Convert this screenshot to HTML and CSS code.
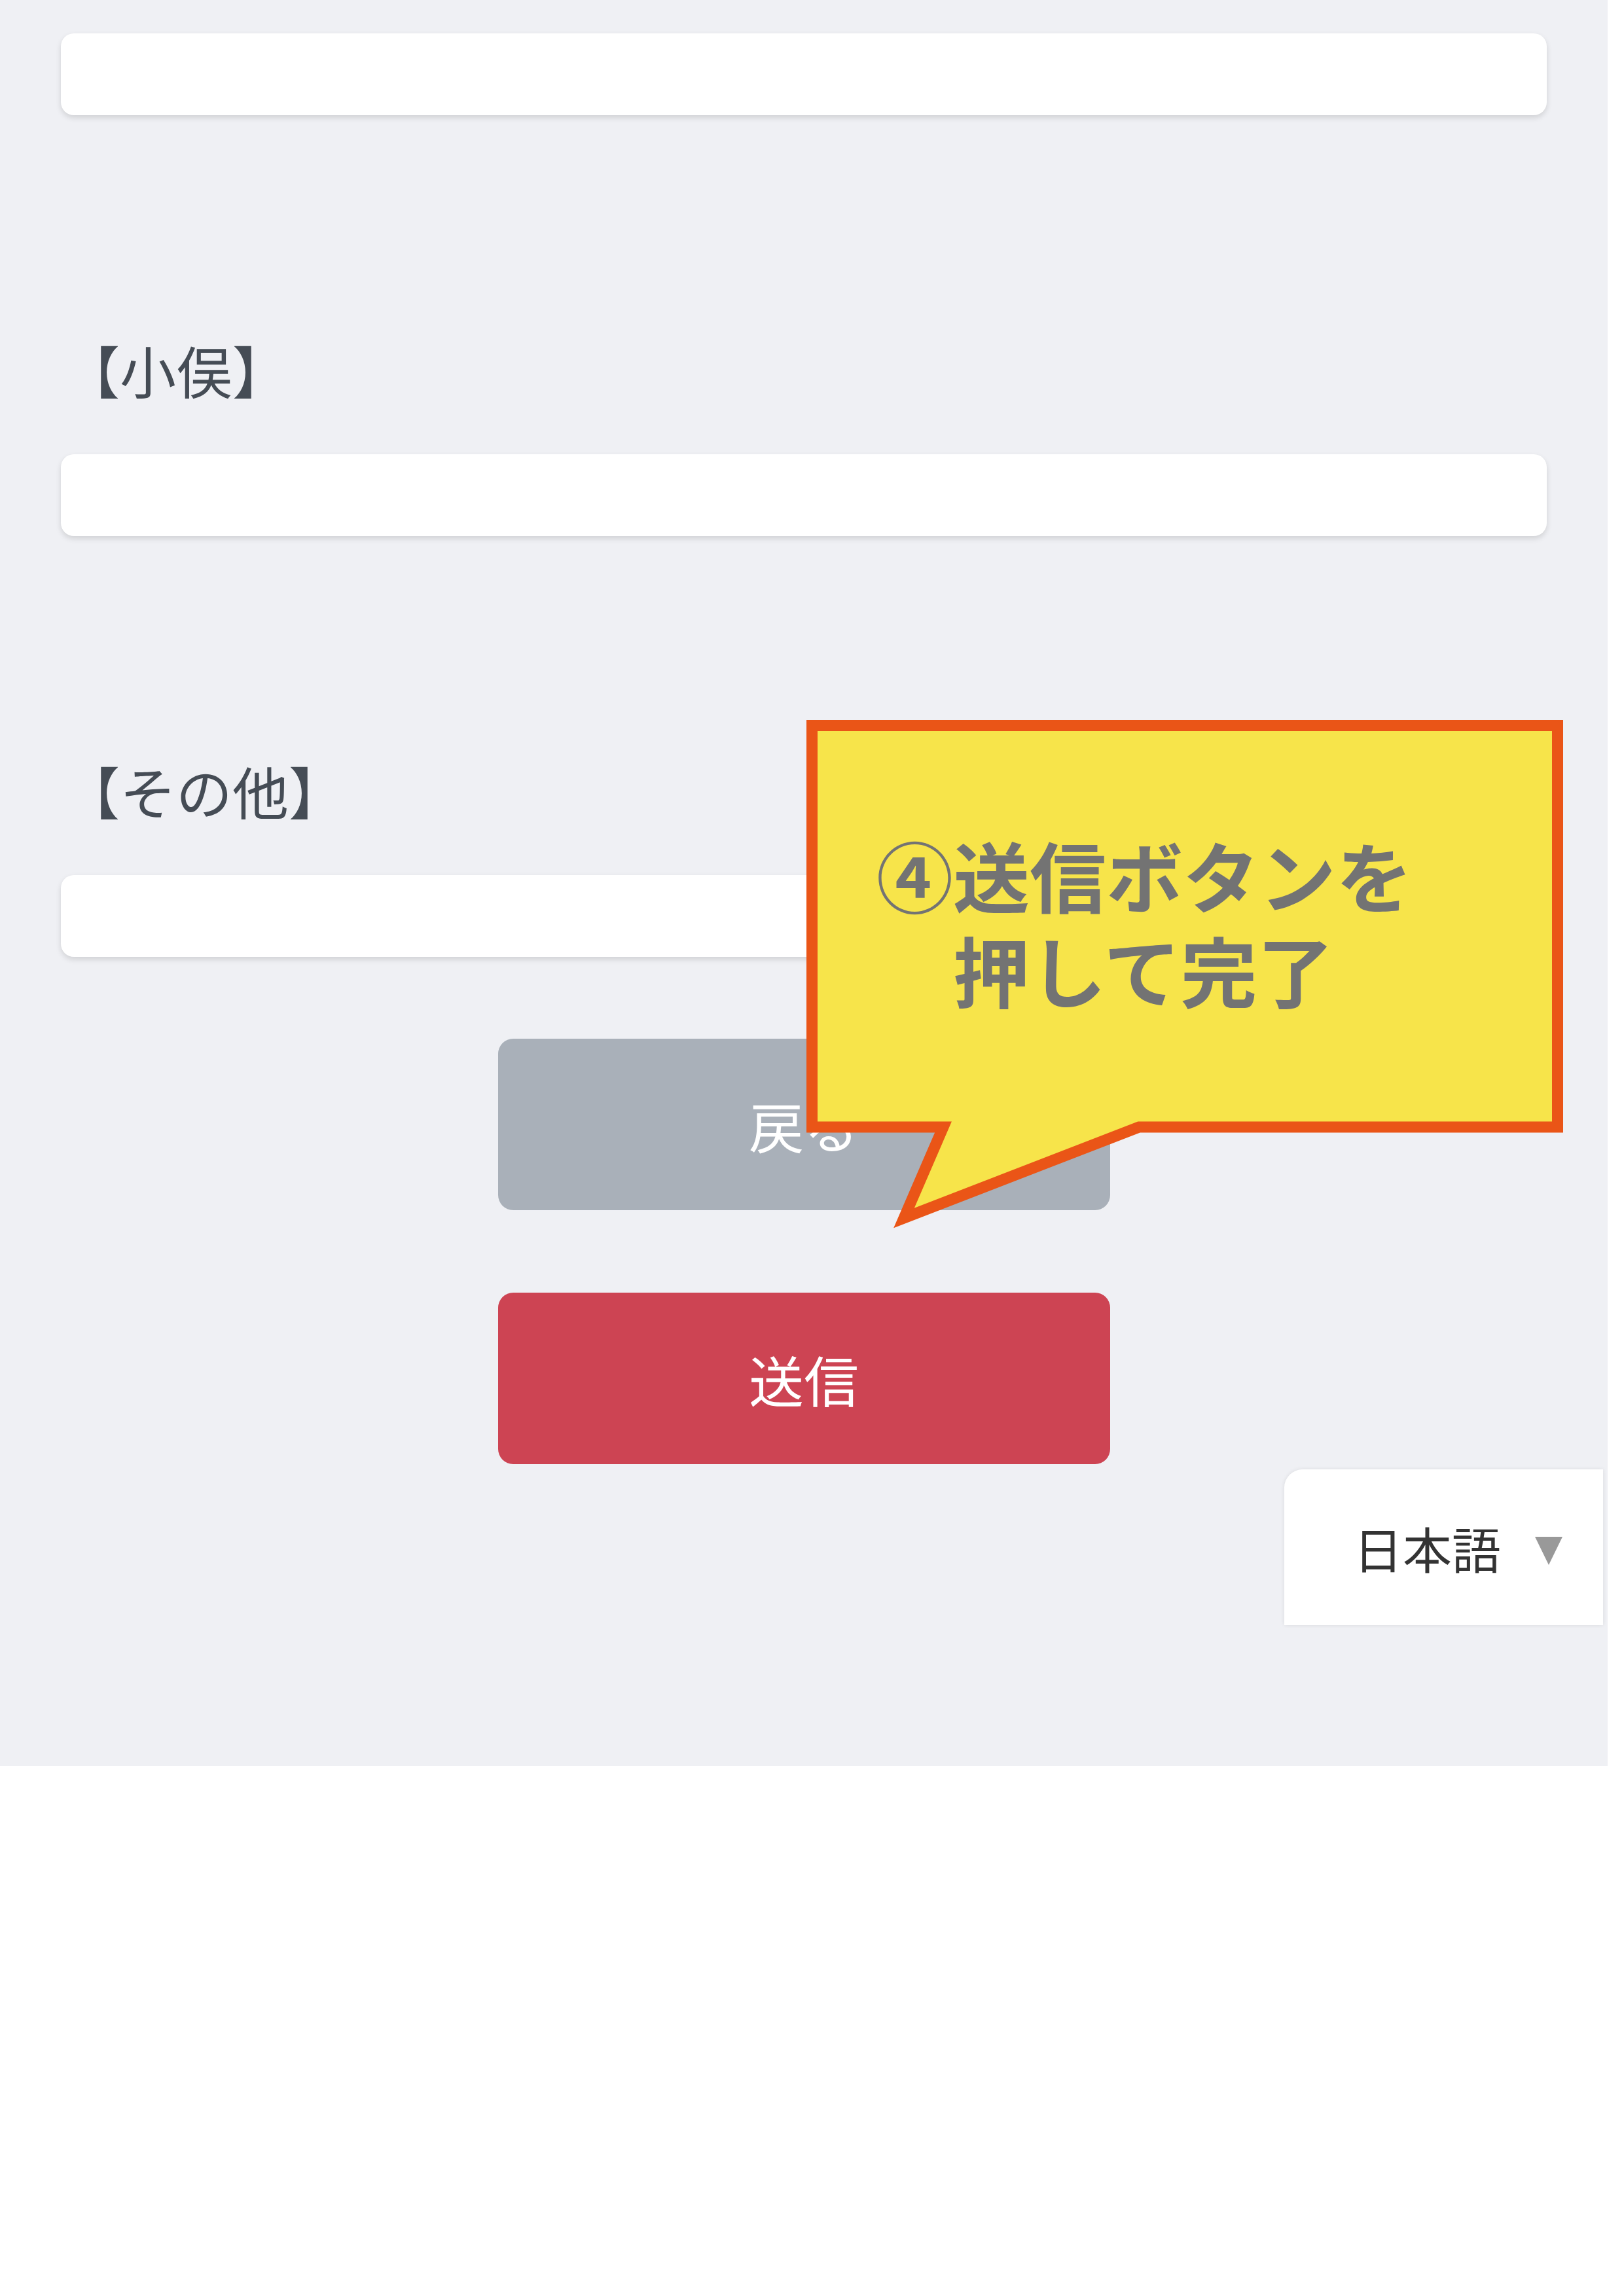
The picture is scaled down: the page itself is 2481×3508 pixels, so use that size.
FILE: index.html
```html
<!DOCTYPE html>
<html lang="ja">
<head>
  <meta charset="UTF-8" />
  <meta name="viewport" content="width=device-width, initial-scale=1.0" />
  <title>お問い合わせ</title>
  <link rel="stylesheet" href="styles.css">
</head>
<body>
  <div class="page">
    <form class="form" onsubmit="return false">
      <input class="text-input" type="text" />

      <label class="field-label">【小俣】</label>
      <input class="text-input" type="text" />

      <label class="field-label">【その他】</label>
      <input class="text-input" type="text" />

      <div class="actions">
        <button type="button" class="btn btn-back">戻る</button>
        <button type="submit" class="btn btn-submit">送信</button>
      </div>
    </form>

    <div class="lang-select">
      <span>日本語</span>
      <span class="caret"></span>
    </div>

    <!-- annotation balloon -->
    <div class="callout">
      <svg class="callout-shape" width="1160" height="800" viewBox="1232 1100 1160 800">
        <polygon points="1240.5,1108.5 2379.5,1108.5 2379.5,1722 1740,1722 1381,1861 1441,1722 1240.5,1722"
                 fill="#f7e44a" stroke="#ea5517" stroke-width="17" stroke-linejoin="miter" />
      </svg>
      <p class="callout-text">
        <span class="line">④送信ボタンを</span>
        <span class="line indent">押して完了</span>
      </p>
    </div>
  </div>
</body>
</html>
```

FILE: styles.css
```css
* {
  box-sizing: border-box;
}
body {
  margin: 0;
  padding: 0;
  background: #fff;
  font-family: "Noto Sans CJK JP", "Noto Sans", sans-serif;
}
.page {
  position: relative;
  width: 2456px;
  height: 2698px;
  background: #eff0f4;
  padding: 51px 93px 0;
}
.form {
  display: flex;
  flex-direction: column;
}
.text-input {
  display: block;
  width: 100%;
  height: 125px;
  border: none;
  border-radius: 20px;
  background: #fff;
  box-shadow: 0 4px 8px rgba(0, 0, 0, 0.13);
  outline: none;
}
.field-label {
  display: block;
  margin: 326px 0 67px;
  padding-left: 4px;
  font-size: 86px;
  line-height: 125px;
  color: #454c55;
}
.actions {
  display: flex;
  flex-direction: column;
  align-items: center;
  gap: 126px;
  margin-top: 125px;
}
.btn {
  width: 935px;
  height: 262px;
  border: none;
  border-radius: 23px;
  font-family: inherit;
  font-size: 84px;
  color: #fff;
  cursor: pointer;
}
.btn-back {
  background: #a9b0b9;
}
.btn-submit {
  background: #cd4453;
}
.lang-select {
  position: absolute;
  top: 2245px;
  right: 7px;
  width: 487px;
  height: 238px;
  display: flex;
  align-items: center;
  gap: 52px;
  padding-left: 106px;
  background: #fff;
  border-top-left-radius: 28px;
  box-shadow: 0 0 6px rgba(0, 0, 0, 0.09);
  font-size: 75px;
  color: #333;
}
.caret {
  width: 0;
  height: 0;
  margin-top: 10px;
  border-left: 21px solid transparent;
  border-right: 21px solid transparent;
  border-top: 43px solid #999;
}
.callout {
  position: absolute;
  left: 1232px;
  top: 1100px;
  width: 1160px;
  height: 800px;
}
.callout-shape {
  position: absolute;
  left: 0;
  top: 0;
}
.callout-text {
  position: relative;
  margin: 0;
  padding: 163px 0 0 107px;
  font-size: 117px;
  font-weight: 700;
  line-height: 145px;
  color: #737373;
}
.callout-text .line {
  display: block;
}
.callout-text .indent {
  padding-left: 1em;
}
```
